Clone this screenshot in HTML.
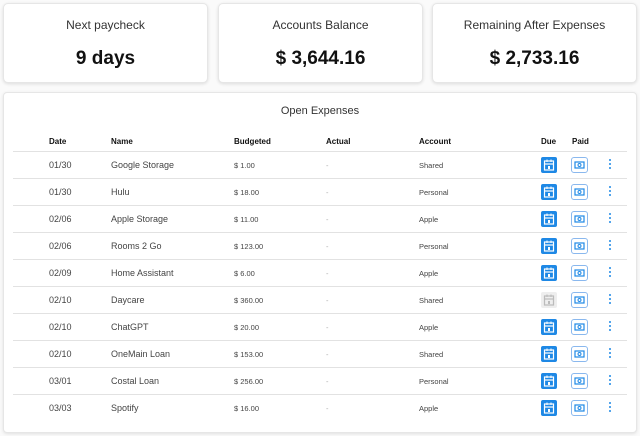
<!DOCTYPE html>
<html><head><style>
body{margin:0;width:640px;height:436px;background:#fafafa;font-family:"Liberation Sans",sans-serif;position:relative;overflow:hidden;color:#222}
.card{position:absolute;top:3px;height:78px;background:#fff;border:1px solid #e6e6e6;border-radius:5px;box-shadow:0 1px 3px rgba(0,0,0,.12);text-align:center}
.card .t{position:absolute;top:14px;width:100%;font-size:12px;color:#333}
.card .v{position:absolute;top:44px;width:100%;font-size:19px;font-weight:bold;color:#111}
.panel{position:absolute;left:3px;top:92px;width:632px;height:339px;background:#fff;border:1px solid #e6e6e6;border-radius:4px;box-shadow:0 1px 3px rgba(0,0,0,.1)}
.title{position:absolute;top:12px;width:100%;text-align:center;font-size:11px;color:#333}
.h{position:absolute;top:44px;font-size:8px;font-weight:bold;color:#111}
.hl{position:absolute;left:9px;width:614px;height:1px;background:#e2e2e2}
.c{position:absolute;font-size:9px;color:#444}
.s{font-size:7.5px}
.due{position:absolute;width:16px;height:16px;background:#1e88e5;border-radius:2px}
.due.g{background:#eee}
.paid{position:absolute;width:15px;height:14px;border:1px solid #8ab8ee;border-radius:3px;background:#fff}
.dots{position:absolute;width:2px}
.dots i{display:block;width:2px;height:2px;background:#1e88e5;border-radius:1px;margin-bottom:2px}
</style></head><body>
<div class="card" style="left:3px;width:203px"><div class="t">Next paycheck</div><div class="v">9 days</div></div>
<div class="card" style="left:218px;width:203px"><div class="t">Accounts Balance</div><div class="v">$ 3,644.16</div></div>
<div class="card" style="left:432px;width:203px"><div class="t">Remaining After Expenses</div><div class="v">$ 2,733.16</div></div>
<div class="panel">
<div class="title">Open Expenses</div>
<div class="h" style="left:45px">Date</div><div class="h" style="left:107px">Name</div><div class="h" style="left:230px">Budgeted</div><div class="h" style="left:322px">Actual</div><div class="h" style="left:415px">Account</div><div class="h" style="left:537px">Due</div><div class="h" style="left:568px">Paid</div>
<div class="hl" style="top:58px"></div>
<div id="rows"></div>
</div>
<script>
var d=[["01/30","Google Storage","$ 1.00","Shared"],["01/30","Hulu","$ 18.00","Personal"],["02/06","Apple Storage","$ 11.00","Apple"],["02/06","Rooms 2 Go","$ 123.00","Personal"],["02/09","Home Assistant","$ 6.00","Apple"],["02/10","Daycare","$ 360.00","Shared",1],["02/10","ChatGPT","$ 20.00","Apple"],["02/10","OneMain Loan","$ 153.00","Shared"],["03/01","Costal Loan","$ 256.00","Personal"],["03/03","Spotify","$ 16.00","Apple"]];
var h="";
var cal='<svg width="16" height="16" viewBox="0 0 16 16"><rect x="3.5" y="4" width="9" height="9" fill="none" stroke="COL" stroke-width="1.2"/><line x1="3.5" y1="7" x2="12.5" y2="7" stroke="COL" stroke-width="1.2"/><line x1="6" y1="2.5" x2="6" y2="5" stroke="COL"/><line x1="10" y1="2.5" x2="10" y2="5" stroke="COL"/><rect x="7" y="9" width="2" height="3" fill="COL"/></svg>';
var pay='<svg width="15" height="14" viewBox="0 0 15 14"><rect x="3" y="4" width="9" height="6" fill="none" stroke="#1e88e5" stroke-width="1.2"/><circle cx="7.5" cy="7" r="1.5" fill="none" stroke="#1e88e5"/></svg>';
d.forEach(function(r,i){var y=72+i*27;
h+='<div class="c" style="left:45px;top:'+(y-5)+'px">'+r[0]+'</div><div class="c" style="left:107px;top:'+(y-5)+'px">'+r[1]+'</div><div class="c s" style="left:230px;top:'+(y-4)+'px">'+r[2]+'</div><div class="c s" style="left:322px;top:'+(y-4)+'px;color:#aaa">-</div><div class="c s" style="left:415px;top:'+(y-4)+'px">'+r[3]+'</div>';
h+='<div class="due'+(r[4]?' g':'')+'" style="left:537px;top:'+(y-8)+'px">'+cal.replace(/COL/g,r[4]?'#bbb':'#fff')+'</div>';
h+='<div class="paid" style="left:567px;top:'+(y-8)+'px">'+pay+'</div>';
h+='<div class="dots" style="left:605px;top:'+(y-6)+'px"><i></i><i></i><i></i></div>';
if(i<9)h+='<div class="hl" style="top:'+(y+13)+'px"></div>';});
document.getElementById("rows").innerHTML=h;
</script>
</body></html>
